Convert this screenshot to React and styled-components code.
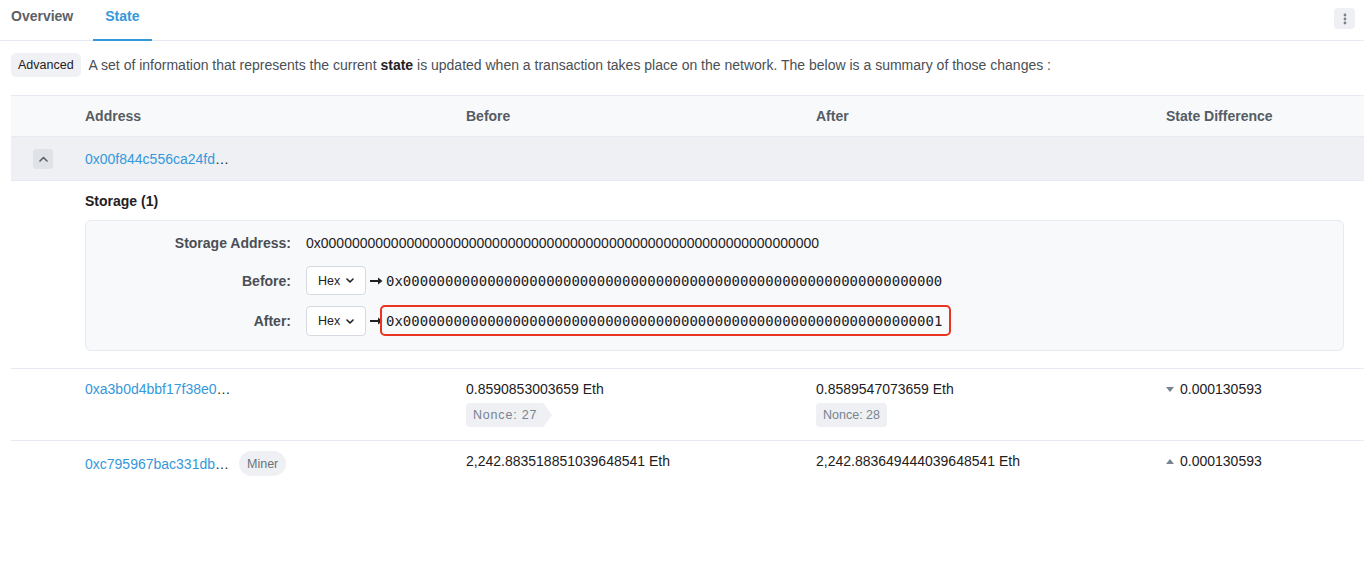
import React from 'react'
import styled, { createGlobalStyle } from 'styled-components'

const GlobalStyle = createGlobalStyle`
  body {
    margin: 0;
    background: #fff;
    font-family: "Liberation Sans", Arial, sans-serif;
    font-size: 14px;
    color: #1e2022;
  }
`

const COLS = '74px 381px 350px 350px 1fr'
const ZEROS = '0'.repeat(64)

const TabBar = styled.div`
  display: flex;
  height: 40px;
  border-bottom: 1px solid #e7eaf3;
  padding-right: 9px;
`

const Tab = styled.div`
  display: flex;
  align-items: center;
  padding: 0 12px 7px;
  margin-left: ${p => (p.first ? '-1px' : '8px')};
  margin-bottom: -1px;
  font-weight: bold;
  font-size: 14px;
  color: ${p => (p.active ? '#3498db' : '#5c6168')};
  border-bottom: 2px solid ${p => (p.active ? '#3498db' : 'transparent')};
`

const KebabButton = styled.div`
  margin-left: auto;
  margin-top: 8px;
  width: 21px;
  height: 21px;
  border-radius: 4px;
  background: #eef0f3;
  display: flex;
  align-items: center;
  justify-content: center;
`

const Intro = styled.div`
  display: flex;
  align-items: center;
  gap: 8px;
  padding: 12px 0 0 11px;
  height: 24px;
  color: #4a4f55;
`

const Badge = styled.span`
  display: inline-flex;
  align-items: center;
  height: 24px;
  padding: 0 7px;
  border-radius: 5px;
  background: #eff1f4;
  color: #1e2022;
  font-size: 12.5px;
`

const Table = styled.div`
  margin: 18px 0 0 11px;
`

const Row = styled.div`
  display: grid;
  grid-template-columns: ${COLS};
  align-items: ${p => (p.top ? 'start' : 'center')};
  min-height: ${p => p.h || 0}px;
  padding: ${p => p.pad || '0'};
  background: ${p => p.bg || '#fff'};
  border-bottom: 1px solid #e7eaf3;
  border-top: ${p => (p.head ? '1px solid #e7eaf3' : 'none')};
  ${p => p.last && 'border-bottom: none;'}
`

const HeadCell = styled.div`
  font-weight: bold;
  color: #555c63;
`

const Cell = styled.div`
  display: flex;
  flex-direction: column;
  align-items: flex-start;
  gap: 6px;
  padding-top: ${p => p.pt || 0}px;
`

const Inline = styled.div`
  display: flex;
  align-items: center;
  gap: 10px;
`

const ToggleButton = styled.div`
  margin-left: 22px;
  width: 20px;
  height: 20px;
  border-radius: 3px;
  background: #dfe2e7;
  display: flex;
  align-items: center;
  justify-content: center;
`

const AddressLink = styled.span`
  color: #3498db;
  & > i {
    font-style: normal;
    color: #1e2022;
  }
`

const Pill = styled.span`
  display: inline-flex;
  align-items: center;
  height: 25px;
  padding: 0 8px;
  border-radius: 13px;
  background: #eef0f3;
  color: #6c737b;
  font-size: 12.5px;
`

const Nonce = styled.span`
  display: inline-flex;
  align-items: center;
  height: 24px;
  padding: 0 ${p => (p.arrow ? '15px' : '7px')} 0 7px;
  border-radius: 4px;
  background: #eef0f3;
  color: #77838f;
  font-size: 12.5px;
  letter-spacing: ${p => (p.arrow ? '0.8px' : '0')};
  clip-path: ${p => (p.arrow ? 'polygon(0 0, calc(100% - 9px) 0, 100% 50%, calc(100% - 9px) 100%, 0 100%)' : 'none')};
`

const Diff = styled.span`
  display: inline-flex;
  align-items: center;
  gap: 6px;
  padding-top: ${p => p.pt || 0}px;
`

const Expanded = styled.div`
  padding: 11px 20px 17px 74px;
  border-bottom: 1px solid #e7eaf3;
`

const StorageTitle = styled.div`
  font-weight: bold;
  line-height: 18px;
  margin-bottom: 10px;
`

const StorageBox = styled.div`
  display: grid;
  grid-template-columns: 205px 1fr;
  column-gap: 15px;
  row-gap: 10px;
  align-items: center;
  padding: 9px 0 13px;
  background: #f8f9fa;
  border: 1px solid #e7eaf3;
  border-radius: 6px;
`

const Label = styled.div`
  text-align: right;
  font-weight: bold;
  color: #4a4f55;
  line-height: ${p => p.h || 28}px;
`

const ValueLine = styled.div`
  display: flex;
  align-items: center;
  min-height: ${p => p.h || 28}px;
`

const Select = styled.div`
  display: flex;
  align-items: center;
  gap: 6px;
  box-sizing: border-box;
  width: 60px;
  height: ${p => p.h || 29}px;
  padding-left: 11px;
  border: 1px solid #d5dae2;
  border-radius: 4px;
  background: #fff;
  font-size: 12.5px;
  color: #1e2022;
`

const Arrow = styled.svg`
  margin: 0 3px 0 4px;
  flex: none;
`

const Mono = styled.span`
  position: relative;
  font-family: "DejaVu Sans Mono", "Liberation Mono", monospace;
  font-size: 14px;
  ${p => p.marked && `
    &::after {
      content: '';
      position: absolute;
      left: -6px;
      right: -9px;
      top: -8px;
      bottom: -7px;
      border: 2px solid #e9341f;
      border-radius: 5px;
    }
  `}
`

const ChevronDown = () => (
  <svg width="8" height="5" viewBox="0 0 8 5">
    <path d="M1 1l3 3 3-3" fill="none" stroke="#1e2022" strokeWidth="1.6" strokeLinecap="round" strokeLinejoin="round" />
  </svg>
)

const RightArrow = () => (
  <Arrow width="13" height="8" viewBox="0 0 13 8">
    <path d="M0 4h9" stroke="#1e2022" strokeWidth="2" />
    <path d="M8 0.5L12.5 4 8 7.5z" fill="#1e2022" />
  </Arrow>
)

const Triangle = ({ up }) => (
  <svg width="8" height="5" viewBox="0 0 8 5">
    <path d={up ? 'M0 5L4 0 8 5z' : 'M0 0L8 0 4 5z'} fill="#77838f" />
  </svg>
)

const HexSelect = ({ h }) => (
  <Select h={h}>
    Hex <ChevronDown />
  </Select>
)

const Address = ({ text }) => (
  <AddressLink>
    {text}
    <i>…</i>
  </AddressLink>
)

const App = () => (
  <>
    <GlobalStyle />
    <TabBar>
      <Tab first>Overview</Tab>
      <Tab active>State</Tab>
      <KebabButton>
        <svg width="4" height="12" viewBox="0 0 4 12">
          <circle cx="2" cy="2" r="1.4" fill="#77838f" />
          <circle cx="2" cy="6" r="1.4" fill="#77838f" />
          <circle cx="2" cy="10" r="1.4" fill="#77838f" />
        </svg>
      </KebabButton>
    </TabBar>

    <Intro>
      <Badge>Advanced</Badge>
      <span>
        A set of information that represents the current <b style={{ color: '#1e2022' }}>state</b> is updated when a
        transaction takes place on the network. The below is a summary of those changes :
      </span>
    </Intro>

    <Table>
      <Row head h={40} bg="#f8f9fb">
        <div />
        <HeadCell>Address</HeadCell>
        <HeadCell>Before</HeadCell>
        <HeadCell>After</HeadCell>
        <HeadCell>State Difference</HeadCell>
      </Row>

      <Row h={43} bg="#eef0f4">
        <ToggleButton>
          <svg width="9" height="6" viewBox="0 0 9 6">
            <path d="M1 5l3.5-3.5L8 5" fill="none" stroke="#5c6168" strokeWidth="1.6" strokeLinecap="round" strokeLinejoin="round" />
          </svg>
        </ToggleButton>
        <Address text="0x00f844c556ca24fd" />
        <div />
        <div />
        <div />
      </Row>

      <Expanded>
        <StorageTitle>Storage (1)</StorageTitle>
        <StorageBox>
          <Label h={26}>Storage Address:</Label>
          <ValueLine h={26}>0x{ZEROS}</ValueLine>

          <Label>Before:</Label>
          <ValueLine>
            <HexSelect />
            <RightArrow />
            <Mono>0x{ZEROS}</Mono>
          </ValueLine>

          <Label h={32}>After:</Label>
          <ValueLine h={32}>
            <HexSelect h={30} />
            <RightArrow />
            <Mono marked>0x{ZEROS.slice(1)}1</Mono>
          </ValueLine>
        </StorageBox>
      </Expanded>

      <Row top pad="12px 0 13px">
        <div />
        <Address text="0xa3b0d4bbf17f38e0" />
        <Cell>
          <span>0.8590853003659 Eth</span>
          <Nonce arrow>Nonce: 27</Nonce>
        </Cell>
        <Cell>
          <span>0.8589547073659 Eth</span>
          <Nonce>Nonce: 28</Nonce>
        </Cell>
        <Diff>
          <Triangle />
          0.000130593
        </Diff>
      </Row>

      <Row top last pad="10px 0">
        <div />
        <Inline>
          <Address text="0xc795967bac331db" />
          <Pill>Miner</Pill>
        </Inline>
        <Cell pt={2}>2,242.883518851039648541 Eth</Cell>
        <Cell pt={2}>2,242.883649444039648541 Eth</Cell>
        <Diff pt={2}>
          <Triangle up />
          0.000130593
        </Diff>
      </Row>
    </Table>
  </>
)

export default App
